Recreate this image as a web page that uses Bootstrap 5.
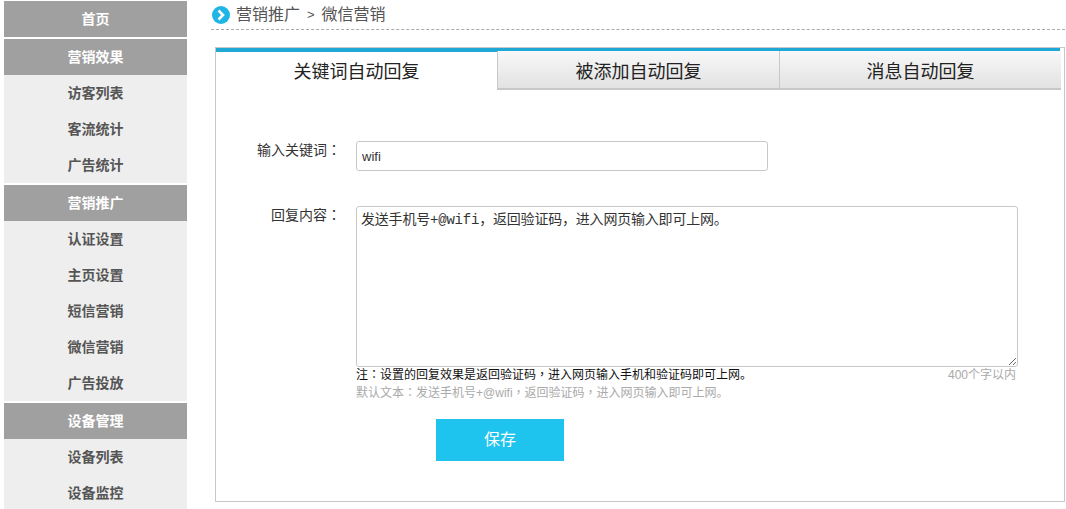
<!DOCTYPE html>
<html lang="zh">
<head>
<meta charset="utf-8">
<title>微信营销</title>
<link href="https://cdn.jsdelivr.net/npm/bootstrap@5.3.0/dist/css/bootstrap.min.css" rel="stylesheet">
<style>
html,body{height:509px;overflow:hidden;background:#fff}
body{font-family:"Liberation Sans","Noto Sans CJK SC",sans-serif;font-size:13px;color:#333}
.shell{padding:1px 0 0 4px;gap:28px}
.side{width:183px;flex:none}
.side a{display:block;height:36px;line-height:37px;text-align:center;font-weight:700;font-size:14px;color:#555;background:#eee;text-decoration:none}
.side a.head{background:#a0a0a0;color:#fff;margin-top:2px}
.side a.head:first-child{margin-top:0}
.mainarea{width:850px;flex:none}
.crumb{margin-left:-4px;height:29px;border-bottom:1px dashed #aaa;font-size:16px;color:#555;gap:6px;padding-left:1px}
.crumb .sep{font-size:13px;margin:0 1px}
.panel{margin-top:17px;height:455px;border:1px solid #c8c8c8;padding-bottom:0}
.topbar{height:4px;background:#1fa7d6;margin-right:4px}
.tabrow{margin-right:3px;height:39px;margin-top:-1px}
.tabitem{flex:1 1 0;text-align:center;font-size:18px;color:#222;line-height:43px;height:39px}
.tabitem.off{background:linear-gradient(#f8f8f8,#e2e2e2);border-left:1px solid #c8c8c8;border-bottom:2px solid #c8c8c8}
.field-label{width:125px;flex:none;text-align:right;color:#333;font-size:14px;line-height:18px;margin-right:15px}
.line1{margin-top:51px}
.line2{margin-top:35px}
.kw{width:412px;height:30px;border:1px solid #c8c8c8;border-radius:3px;font-size:13px;padding:0 5px;color:#333;box-shadow:none}
.reply{width:662px;height:161px;border:1px solid #c8c8c8;border-radius:3px;font-family:"Liberation Mono","Noto Sans CJK SC",monospace;font-size:14px;line-height:18px;letter-spacing:-.2px;padding:4px;color:#333;box-shadow:none;display:block;resize:vertical}
.notes{margin-left:140px;width:660px;font-size:12px;line-height:18px;margin-top:-1px}
.note-a{color:#111}
.note-b{color:#aaa}
.note-c{color:#aaa}
.punct{font-family:"Noto Sans CJK TC",sans-serif;line-height:1}
.savebtn{margin:17px 0 0 220px;width:128px;height:42px;background:#1fc4ee;color:#fff;border:0;border-radius:0;font-size:16px;padding:0}
.savebtn:hover{background:#1fc4ee;color:#fff}
</style>
</head>
<body>
<div class="d-flex shell">
  <nav class="side">
    <a class="head" href="#">首页</a>
    <a class="head" href="#">营销效果</a>
    <a href="#">访客列表</a>
    <a href="#">客流统计</a>
    <a href="#">广告统计</a>
    <a class="head" href="#">营销推广</a>
    <a href="#">认证设置</a>
    <a href="#">主页设置</a>
    <a href="#">短信营销</a>
    <a href="#">微信营销</a>
    <a href="#">广告投放</a>
    <a class="head" href="#">设备管理</a>
    <a href="#">设备列表</a>
    <a href="#">设备监控</a>
  </nav>
  <main class="mainarea">
    <div class="crumb d-flex align-items-center">
      <svg width="18" height="18" viewBox="0 0 18 18" aria-hidden="true"><circle cx="9" cy="9" r="9" fill="#1fb6e6"/><path d="M6.500 4.500 11 9l-4.500 4.500" fill="none" stroke="#fff" stroke-width="2.600"/></svg>
      <span>营销推广</span><span class="sep">&gt;</span><span>微信营销</span>
    </div>
    <section class="panel">
      <div class="topbar"></div>
      <div class="d-flex tabrow">
        <div class="tabitem">关键词自动回复</div>
        <div class="tabitem off">被添加自动回复</div>
        <div class="tabitem off">消息自动回复</div>
      </div>
      <div class="d-flex line1">
        <label class="field-label" for="kw">输入关键词<span class="punct" lang="zh-TW">：</span></label>
        <input id="kw" class="form-control kw" value="wifi">
      </div>
      <div class="d-flex line2">
        <label class="field-label" for="rp">回复内容<span class="punct" lang="zh-TW">：</span></label>
        <textarea id="rp" class="form-control reply">发送手机号+@wifi，返回验证码，进入网页输入即可上网。</textarea>
      </div>
      <div class="notes">
        <div class="d-flex justify-content-between"><span class="note-a">注<span class="punct" lang="zh-TW">：</span>设置的回复效果是返回验证码<span class="punct" lang="zh-TW">，</span>进入网页输入手机和验证码即可上网。</span><span class="note-c">400个字以内</span></div>
        <div class="note-b">默认文本<span class="punct" lang="zh-TW">：</span>发送手机号+@wifi<span class="punct" lang="zh-TW">，</span>返回验证码<span class="punct" lang="zh-TW">，</span>进入网页输入即可上网。</div>
      </div>
      <button class="btn savebtn" type="button">保存</button>
    </section>
  </main>
</div>
<script src="https://cdn.jsdelivr.net/npm/bootstrap@5.3.0/dist/js/bootstrap.bundle.min.js"></script>
</body>
</html>
